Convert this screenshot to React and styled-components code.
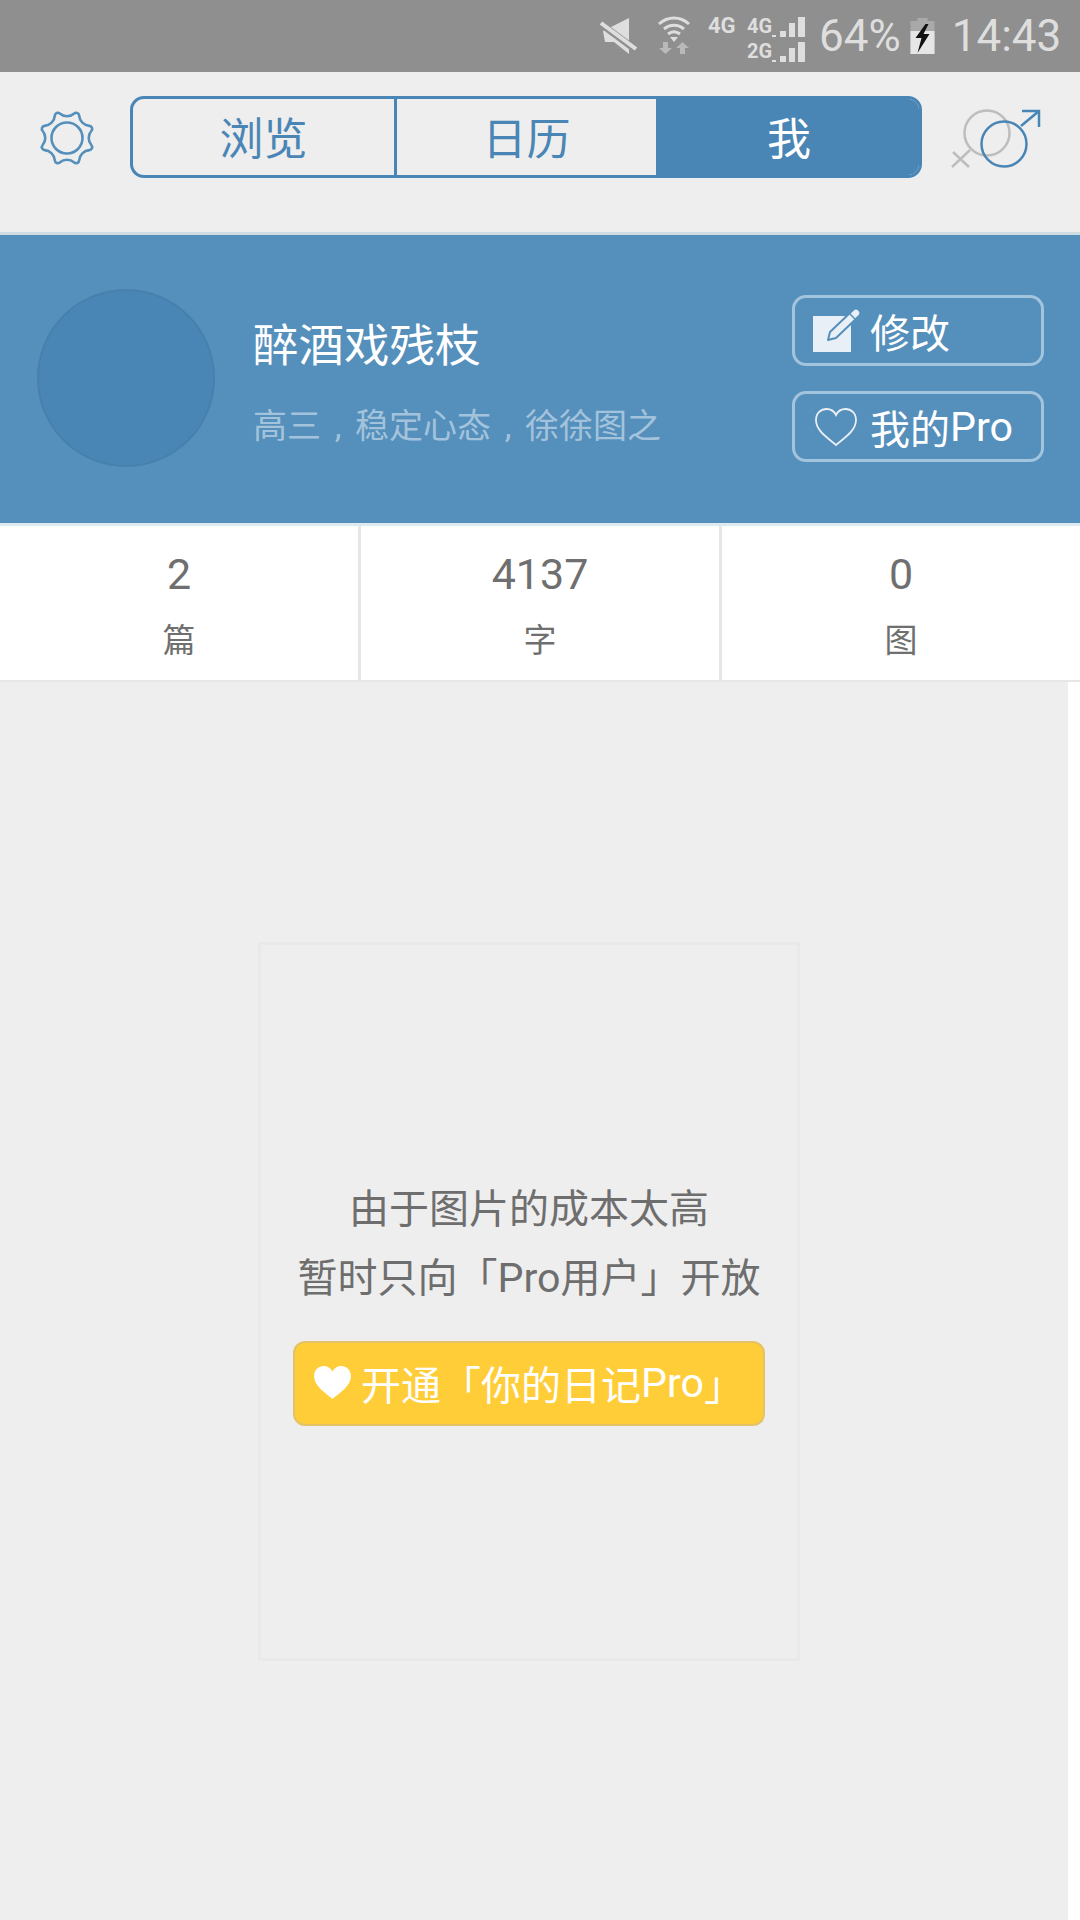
import React from "react";
import styled, { createGlobalStyle } from "styled-components";

const Global = createGlobalStyle`
  html, body { margin: 0; padding: 0; background: #eee; }
  body { font-family: Roboto, "Noto Sans CJK SC", sans-serif; }
  * { box-sizing: border-box; }
`;

const Page = styled.div`
  width: 1080px;
  height: 1920px;
  display: flex;
  flex-direction: column;
  overflow: hidden;
`;

const StatusBar = styled.div`
  height: 72px;
  background: #8f8f8f;
  display: flex;
  align-items: flex-start;
  padding-left: 600px;
  color: #dedede;
`;
const StatusIcon = styled.svg`
  display: block;
  flex: none;
  margin-left: ${(p) => p.$ml || 0}px;
  margin-top: ${(p) => p.$mt || 0}px;
`;
const SmallNet = styled.span`
  font-size: 22px;
  font-weight: 700;
  line-height: 22px;
  margin-left: 17px;
  margin-top: 15px;
  width: 30px;
  color: #dedede;
`;
const NetStack = styled.div`
  margin-left: 9px;
  margin-top: 13px;
  width: 58px;
  display: grid;
  grid-template-rows: 24px 24px;
  row-gap: 1px;
`;
const NetRow = styled.div`
  display: flex;
  align-items: flex-end;
  justify-content: space-between;
  font-size: 20px;
  font-weight: 700;
  line-height: 22px;
`;
const StatusText = styled.span`
  font-size: ${(p) => p.$size}px;
  line-height: 72px;
  margin-left: ${(p) => p.$ml}px;
  white-space: nowrap;
`;

const Nav = styled.div`
  height: 163px;
  flex: none;
  border-bottom: 3px solid #cfdde3;
  background: #eee;
  display: flex;
  align-items: flex-start;
  padding: 24px 0 0 37px;
`;
const Gear = styled.svg`
  display: block;
  margin-top: 12px;
  flex: none;
`;
const Segment = styled.div`
  margin-left: 33px;
  width: 792px;
  height: 82px;
  border: 3px solid #4a86b5;
  border-radius: 14px;
  display: flex;
  overflow: hidden;
  flex: none;
`;
const SegItem = styled.div`
  flex: none;
  width: ${(p) => p.$w}px;
  display: flex;
  align-items: center;
  justify-content: center;
  padding-bottom: 2px;
  font-size: 44px;
  color: ${(p) => (p.$active ? "#fff" : "#4a86b5")};
  background: ${(p) => (p.$active ? "#4a86b5" : "transparent")};
  border-right: ${(p) => (p.$active ? 0 : "3px solid #4a86b5")};
`;
const Gender = styled.svg`
  display: block;
  margin-left: 28px;
  margin-top: 13px;
  flex: none;
`;

const Banner = styled.div`
  height: 291px;
  flex: none;
  background: #558fbb;
  border-bottom: 3px solid #dfe9f1;
  display: flex;
  align-items: flex-start;
  padding-left: 37px;
`;
const Avatar = styled.div`
  width: 178px;
  height: 178px;
  margin-top: 54px;
  border-radius: 50%;
  background: #4a86b5;
  border: 2px solid #4780ad;
  flex: none;
`;
const Info = styled.div`
  margin-left: 38px;
  width: 539px;
  flex: none;
  padding-top: 84px;
`;
const Name = styled.div`
  font-size: 45.500px;
  line-height: 56px;
  color: #fff;
`;
const Motto = styled.div`
  font-size: 34px;
  line-height: 44px;
  margin-top: 29px;
  color: #a3c3dc;
  white-space: nowrap;
`;
const Comma = styled.span`
  display: inline-block;
  width: 1em;
  text-align: center;
  font-family: Roboto, sans-serif;
`;
const Latin = styled.span`
  font-size: 1.03em;
`;
const Actions = styled.div`
  width: 252px;
  padding-top: 60px;
  display: flex;
  flex-direction: column;
  gap: 25px;
  flex: none;
`;
const ActionButton = styled.div`
  height: 71px;
  border: 3px solid #a3c4dd;
  border-radius: 14px;
  display: flex;
  align-items: center;
  padding-left: 18px;
  color: #fff;
  font-size: 40px;
  white-space: nowrap;
`;
const ActionIcon = styled.svg`
  display: block;
  width: 46px;
  height: ${(p) => p.$h}px;
  flex: none;
  margin-right: 11px;
  overflow: visible;
`;

const Stats = styled.div`
  height: 156px;
  flex: none;
  display: flex;
  background: #fff;
  border-bottom: 2px solid #e6e6e6;
`;
const Stat = styled.div`
  width: ${(p) => (p.$last ? 358 : 361)}px;
  flex: none;
  display: flex;
  flex-direction: column;
  align-items: center;
  padding-top: 25px;
  border-right: ${(p) => (p.$last ? 0 : "3px solid #e6e6e6")};
  color: #6f6f6f;
`;
const StatNum = styled.div`
  font-size: 43px;
  line-height: 46px;
`;
const StatLabel = styled.div`
  font-size: 33px;
  line-height: 46px;
  margin-top: 21px;
`;

const Content = styled.div`
  flex: 1;
  display: flex;
  background: #fff;
`;
const Main = styled.div`
  width: 1068px;
  background: #eee;
  padding: 260px 0 0 258px;
`;
const Card = styled.div`
  width: 542px;
  height: 719px;
  border: 3px solid #e9e9e9;
  padding-bottom: 2px;
  display: flex;
  flex-direction: column;
  align-items: center;
  justify-content: center;
`;
const CardLine = styled.div`
  font-size: 40px;
  line-height: 68px;
  color: #6e6e6e;
  white-space: nowrap;
`;
const OpenButton = styled.div`
  width: 472px;
  height: 85px;
  margin-top: 28px;
  background: #ffcd38;
  border: 2px solid #e3c268;
  border-radius: 12px;
  color: #fff;
  font-size: 40px;
  display: flex;
  align-items: center;
  padding: 0 0 1px 18px;
  white-space: nowrap;
`;
const SolidHeart = styled.svg`
  display: block;
  width: 39px;
  height: 35px;
  margin-right: 9px;
  flex: none;
`;

const gearPath = (() => {
  const P = (deg) => {
    const a = (deg * Math.PI) / 180;
    return `${(30 + 25.5 * Math.sin(a)).toFixed(2)} ${(30 - 25.5 * Math.cos(a)).toFixed(2)}`;
  };
  let d = "";
  for (let i = 0; i < 8; i++) {
    const c = 22.5 + 45 * i;
    d += i === 0 ? `M${P(c - 6)}` : `A11 11 0 0 0 ${P(c - 6)}`;
    d += `A3 3 0 0 1 ${P(c + 6)}`;
  }
  return `${d}A11 11 0 0 0 ${P(16.5)}Z`;
})();

const heartD =
  "M22 38C14 31 2 24 2 13C2 6 7 2 12.5 2C16.5 2 20 4 22 8C24 4 27.5 2 31.5 2C37 2 42 6 42 13C42 24 30 31 22 38Z";

function Bars() {
  return (
    <svg width="33" height="20" viewBox="0 0 33 20" style={{ display: "block" }}>
      <path d="M0 20h4v-2H0zM8 20h6v-6H8zM17 20h6V6h-6zM26 20h7V0h-7z" fill="#dedede" />
    </svg>
  );
}

export default function App() {
  return (
    <Page>
      <Global />
      <StatusBar>
        <StatusIcon $mt={17} width="37" height="38" viewBox="0 0 37 38">
          <path d="M29 1v36L14 25H5L3 14z" fill="#dedede" />
          <path d="M1 7L36 33" stroke="#8f8f8f" strokeWidth="7" />
          <path d="M1 6L36 32" stroke="#dedede" strokeWidth="4" />
        </StatusIcon>
        <StatusIcon $ml={20} $mt={16} width="34" height="38" viewBox="0 0 34 38">
          <path d="M2 8C11 0 23 0 32 8M7 13C13 8 21 8 27 13M11 18C15 15 19 15 23 18" fill="none" stroke="#dedede" strokeWidth="3" />
          <path d="M17 26l-4-5h8z" fill="#dedede" />
          <path d="M6 26h5v6h4l-6.500 6L2 32h4zM23 38h5v-6h4l-6.500-6L19 32h4z" fill="#b9b9b9" />
        </StatusIcon>
        <SmallNet>4G</SmallNet>
        <NetStack>
          <NetRow>4G<Bars /></NetRow>
          <NetRow>2G<Bars /></NetRow>
        </NetStack>
        <StatusText $size={44} $ml={14}>64%</StatusText>
        <StatusIcon $ml={9} $mt={18} width="25" height="36" viewBox="0 0 24 36">
          <path d="M7 0h10v3h7v33H0V3h7z" fill="#a9a9a9" />
          <path d="M0 13h24v23H0z" fill="#e6e6e6" />
          <path d="M15 6L5 20h6l-4 15L19 16h-6l5-10z" fill="#111" />
        </StatusIcon>
        <StatusText $size={44} $ml={17}>14:43</StatusText>
      </StatusBar>

      <Nav>
        <Gear width="60" height="60" viewBox="0 0 60 60">
          <path d={gearPath} fill="none" stroke="#558fbb" strokeWidth="2.600" strokeLinejoin="round" />
          <circle cx="30" cy="30" r="15.500" fill="none" stroke="#558fbb" strokeWidth="2.600" />
        </Gear>
        <Segment>
          <SegItem $w={264}>浏览</SegItem>
          <SegItem $w={262}>日历</SegItem>
          <SegItem $w={260} $active>我</SegItem>
        </Segment>
        <Gender width="94" height="62" viewBox="0 0 94 62">
          <g fill="none" stroke="#bdbdbd" strokeWidth="2.500">
            <circle cx="37" cy="24" r="22.500" />
            <path d="M20 41L2 58M3 43L19 58" />
          </g>
          <g fill="none" stroke="#4a86b5" strokeWidth="2.500">
            <circle cx="54" cy="35" r="22.500" />
            <path d="M71 17L89 2M72 2H89V18" />
          </g>
        </Gender>
      </Nav>

      <Banner>
        <Avatar />
        <Info>
          <Name>醉酒戏残枝</Name>
          <Motto>高三<Comma>,</Comma>稳定心态<Comma>,</Comma>徐徐图之</Motto>
        </Info>
        <Actions>
          <ActionButton>
            <ActionIcon $h={46} viewBox="0 0 46 46">
              <path d="M0 8h38v36H0z" fill="#e8eff6" />
              <path
                d="M15 32L17 24L40 2A4.200 4.200 0 0 1 46 8L23 30Z"
                fill="#e8eff6"
                stroke="#558fbb"
                strokeWidth="2"
                strokeLinejoin="round"
              />
              <path d="M36.500 5.500L42.500 11.500" stroke="#558fbb" strokeWidth="1.500" />
            </ActionIcon>
            修改
          </ActionButton>
          <ActionButton>
            <ActionIcon $h={38} viewBox="1 1 42 38">
              <path d={heartD} fill="none" stroke="#e8eff6" strokeWidth="1.800" />
            </ActionIcon>
            我的<Latin>Pro</Latin>
          </ActionButton>
        </Actions>
      </Banner>

      <Stats>
        <Stat><StatNum>2</StatNum><StatLabel>篇</StatLabel></Stat>
        <Stat><StatNum>4137</StatNum><StatLabel>字</StatLabel></Stat>
        <Stat $last><StatNum>0</StatNum><StatLabel>图</StatLabel></Stat>
      </Stats>

      <Content>
        <Main>
          <Card>
            <CardLine>由于图片的成本太高</CardLine>
            <CardLine>暂时只向「<Latin>Pro</Latin>用户」开放</CardLine>
            <OpenButton>
              <SolidHeart viewBox="1 1 42 38">
                <path d={heartD} fill="#fff" />
              </SolidHeart>
              开通「你的日记<Latin>Pro</Latin>」
            </OpenButton>
          </Card>
        </Main>
      </Content>
    </Page>
  );
}
